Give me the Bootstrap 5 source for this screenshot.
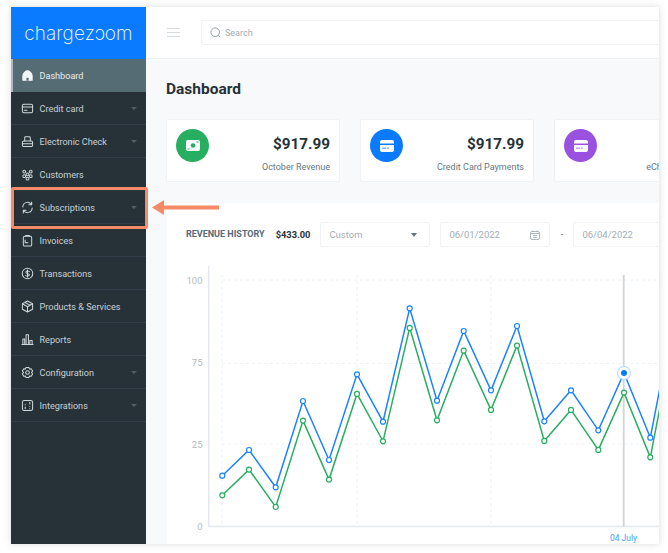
<!DOCTYPE html>
<html lang="en">
<head>
<meta charset="utf-8">
<title>Chargezoom Dashboard</title>
<link rel="stylesheet" href="https://cdn.jsdelivr.net/npm/bootstrap@5.3.0/dist/css/bootstrap.min.css">
<style>
html,body{height:553px;overflow:hidden;background:#fff;font-family:Roboto,"Liberation Sans",sans-serif}
.stage{width:668px;height:553px;padding:7px 9px 9px 11px;position:relative}
.appframe{height:537px;box-shadow:0 0 7px rgba(60,70,80,.2);overflow:hidden}
.sidebar{width:135px;background:#263138;flex:none}
.logobar{height:52px;background:#0a7bff;color:#fff;font-family:Inter,Roboto,sans-serif;font-size:19px;font-weight:200;letter-spacing:.1px;line-height:1}
.menuitem{height:33px;padding:0 9px 0 10px;color:#c9d1d6;font-size:9.1px;border-bottom:1px solid #2f3e48}
.menuitem span{padding-top:3px}
.menuitem.current{background:#566c75;color:#e8edef;border-left:2px solid #aeb9bd;padding-left:8px;border-bottom:0}
.menuitem svg.mi{width:13px;height:13px;margin-right:5.500px;flex:none;fill:none;stroke:#d0d7da;stroke-width:1.100;stroke-linecap:round;stroke-linejoin:round}
.caretmini{width:0;height:0;border-left:3px solid transparent;border-right:3px solid transparent;border-top:3px solid #4e606b}
.mainpane{min-width:0;background:#f8f9fb}
.topstrip{height:52px;background:#fff;border-bottom:1px solid #eef0f2;padding-left:21px;flex:none}
.burger{width:13px;height:9px;border-top:1px solid #d5dcdf;border-bottom:1px solid #d5dcdf;flex:none;margin-right:21px}
.burger::after{content:"";display:block;height:1px;background:#d5dcdf;margin-top:3px}
.searchfield{width:500px;height:25px;border:1px solid #f0f2f4;border-radius:2px;padding-left:8px;color:#a0acb3;font-size:9px;flex:none}
.searchfield svg{margin-right:4px}
.searchlabel{padding-top:3px}
.pagename{font-size:15.5px;font-weight:700;color:#263138;margin:21px 0 0 20px;line-height:18px}
.statrow{margin:21px 0 0 20px;gap:20px;flex-wrap:nowrap}
.statbox{width:174px;height:63px;background:#fff;border:1px solid #f0f2f4;border-radius:2px;flex:none;padding:9px 9px 0 9px}
.disc{width:33px;height:33px;border-radius:50%;flex:none}
.amount{font-size:15.3px;font-weight:700;color:#263138;line-height:19px;margin-top:6px}
.capt{font-size:9px;color:#68777f;line-height:12px;margin-top:7px}
.chartpanel{margin:21px 0 0 21px;background:#fff;flex:1;min-height:0;width:500px}
.filters{padding:19px 0 0 19px;height:62px;flex:none}
.rh{font-size:9px;font-weight:700;color:#56697a;margin-right:11px;white-space:nowrap;padding-top:1px}
.rv{font-size:9.300px;font-weight:700;color:#263138;margin-right:10px;padding-top:1px}
.filtertext{height:25px}
.fbox{height:25px;border:1px solid #f0f2f4;border-radius:2px;color:#a3adb4;font-size:9.500px;padding:0 9px 0 8px;flex:none}
.fbox span{padding-top:1px}
.fcustom{width:110px;margin-right:10px}
.fdate{width:110px}
.sep{font-size:9px;color:#55656e;margin:0 10px;width:3px;height:25px;flex:none}
.bcaret{width:0;height:0;border-left:3.500px solid transparent;border-right:3.500px solid transparent;border-top:4px solid #66757d;margin-right:3px}
.plotsvg{display:block;flex:none}
.plotsvg text{font-family:Roboto,"Liberation Sans",sans-serif;font-size:9.500px;fill:#b3bcc4}
.plotsvg text.xlab{fill:#4a9cff;font-size:8.500px}
.hilite{position:absolute;left:11px;top:187px;width:137px;height:42px;border:3.500px solid #f58a67;border-radius:2px;box-shadow:inset 0 0 2px rgba(0,0,0,.3);pointer-events:none}
.bigarrow{position:absolute;left:150px;top:198px}
</style>
</head>
<body>
<div class="stage">
<div class="appframe d-flex">
<aside class="sidebar d-flex flex-column">
<div class="logobar d-flex align-items-center justify-content-center">chargezɔom</div>
<div class="menuitem current d-flex align-items-center"><svg class="mi" viewBox="0 0 14 14"><path fill="#f2f5f6" stroke="#f2f5f6" d="M2 7.500C2 5 4.500 2 7 2s5 3 5 5.500V12H2z"/><path d="M5.800 12.500V9.500h2.400v3" fill="#566c75" stroke="none"/></svg><span>Dashboard</span></div>
<div class="menuitem d-flex align-items-center"><svg class="mi" viewBox="0 0 14 14"><rect x="1.500" y="2.500" width="11" height="9" rx="1.500"/><path d="M1.500 5.500h11M3.500 9h3"/></svg><span class="flex-grow-1">Credit card</span><i class="caretmini"></i></div>
<div class="menuitem d-flex align-items-center"><svg class="mi" viewBox="0 0 14 14"><rect x="1.500" y="6.500" width="11" height="6" rx="1.500"/><path d="M4 6.500V3a1 1 0 0 1 1-1h4a1 1 0 0 1 1 1v3.500M1.500 9.500h11"/></svg><span class="flex-grow-1">Electronic Check</span><i class="caretmini"></i></div>
<div class="menuitem d-flex align-items-center"><svg class="mi" viewBox="0 0 14 14"><circle cx="3.500" cy="3.800" r="1.500"/><circle cx="10.500" cy="3.800" r="1.500"/><circle cx="7" cy="6.800" r="1.500"/><circle cx="3.500" cy="8.800" r="1.500"/><circle cx="10.500" cy="8.800" r="1.500"/><circle cx="7" cy="11.500" r="1.500"/></svg><span>Customers</span></div>
<div class="menuitem d-flex align-items-center"><svg class="mi" viewBox="0 0 14 14"><path d="M2 6.500A5 5 0 0 1 11 3.500M12 7.500A5 5 0 0 1 3 10.500M11.500 1v3h-3M2.500 13v-3h3"/></svg><span class="flex-grow-1">Subscriptions</span><i class="caretmini"></i></div>
<div class="menuitem d-flex align-items-center"><svg class="mi" viewBox="0 0 14 14"><rect x="2.500" y="2.500" width="9" height="10.500" rx="1.500"/><path d="M5 2.500V1.500h4v1M4.500 6.500v3h3"/></svg><span>Invoices</span></div>
<div class="menuitem d-flex align-items-center"><svg class="mi" viewBox="0 0 14 14"><circle cx="7" cy="7" r="5.700"/><path d="M9 5c-.5-1-3.800-1.200-3.800.6C5.200 7.500 9 6.500 9 8.400 9 10 5.500 10 5 9M7 3.300v7.400"/></svg><span>Transactions</span></div>
<div class="menuitem d-flex align-items-center"><svg class="mi" viewBox="0 0 14 14"><path d="M7 1l5.500 3v6L7 13l-5.500-3V4zM1.500 4L7 7.200 12.500 4M7 7.200V13M4.200 2.500l5.500 3.100"/></svg><span>Products &amp; Services</span></div>
<div class="menuitem d-flex align-items-center"><svg class="mi" viewBox="0 0 14 14"><path d="M1 12.500h12M2 12.500V6.500h2v6M5.500 12.500V2h2.500v10.500M9.500 12.500V8h2.500v4.500"/></svg><span>Reports</span></div>
<div class="menuitem d-flex align-items-center"><svg class="mi" viewBox="0 0 14 14"><circle cx="7" cy="7" r="2"/><path d="M5.500 1.500h3l.7 1.700 1.800-.2 1.500 2.500L11.300 7l1.200 1.500-1.500 2.500-1.800-.2-.7 1.700h-3l-.7-1.700-1.800.2L1.500 8.500 2.700 7 1.500 5.500 3 3l1.800.2z"/></svg><span class="flex-grow-1">Configuration</span><i class="caretmini"></i></div>
<div class="menuitem d-flex align-items-center"><svg class="mi" viewBox="0 0 14 14"><rect x="1.500" y="1.500" width="11" height="11" rx="2"/><path d="M4.500 8.500v2M9.500 3.500v2M9.500 8v.1M9.500 10.500v.1M4.500 6v.1"/></svg><span class="flex-grow-1">Integrations</span><i class="caretmini"></i></div>
</aside>
<main class="mainpane flex-grow-1 d-flex flex-column">
<div class="topstrip d-flex align-items-center">
<div class="burger"></div>
<div class="searchfield d-flex align-items-center"><svg width="11" height="11" viewBox="0 0 11 11" fill="none" stroke="#93a1a9"><circle cx="5.200" cy="5.200" r="4.300"/><path d="M8.300 8.300l1.800 1.800"/></svg><span class="searchlabel">Search</span></div>
</div>
<h1 class="pagename">Dashboard</h1>
<div class="statrow d-flex">
<div class="statbox d-flex">
<div class="disc d-flex align-items-center justify-content-center" style="background:#27ae60"><svg width="14" height="13" viewBox="0 0 14 13"><rect x="0" y="1" width="14" height="11" rx="2" fill="#fff"/><circle cx="7" cy="6.500" r="2.300" fill="#27ae60"/><path d="M10.500 3h2M1.500 10h2" stroke="#27ae60"/></svg></div>
<div class="flex-grow-1 text-end"><div class="amount">$917.99</div><div class="capt">October Revenue</div></div>
</div>
<div class="statbox d-flex">
<div class="disc d-flex align-items-center justify-content-center" style="background:#0a7bff"><svg width="14" height="12" viewBox="0 0 14 12"><rect width="14" height="12" rx="2" fill="#fff"/><rect y="3.500" width="14" height="1.500" fill="#0a7bff"/><rect x="2" y="7.500" width="4" height="1.500" fill="#7cb6ff"/><rect x="7" y="7.500" width="2" height="1.500" fill="#7cb6ff"/></svg></div>
<div class="flex-grow-1 text-end"><div class="amount">$917.99</div><div class="capt">Credit Card Payments</div></div>
</div>
<div class="statbox d-flex">
<div class="disc d-flex align-items-center justify-content-center" style="background:#9b51e0"><svg width="14" height="12" viewBox="0 0 14 12"><rect width="14" height="12" rx="2" fill="#fff"/><rect y="3.500" width="14" height="1.500" fill="#9b51e0"/><rect x="2" y="7.500" width="4" height="1.500" fill="#c9a3ee"/><rect x="7" y="7.500" width="2" height="1.500" fill="#c9a3ee"/></svg></div>
<div class="flex-grow-1 text-end"><div class="amount">$917.99</div><div class="capt">eCheck Payments</div></div>
</div>
</div>
<section class="chartpanel d-flex flex-column">
<div class="filters d-flex align-items-start">
<div class="filtertext d-flex align-items-center"><span class="rh">REVENUE HISTORY</span><span class="rv">$433.00</span></div>
<div class="fbox fcustom d-flex align-items-center justify-content-between"><span>Custom</span><i class="bcaret"></i></div>
<div class="fbox fdate d-flex align-items-center justify-content-between"><span>06/01/2022</span><svg width="10" height="10" viewBox="0 0 10 10" fill="none" stroke="#9ba6ad" stroke-width=".8"><rect x=".5" y="1.500" width="9" height="8" rx="1.500"/><path d="M.5 3.500h9M3 .5v1.500M7 .5v1.500M3 5.500h4M3 7.500h4"/></svg></div>
<div class="sep d-flex align-items-center justify-content-center">-</div>
<div class="fbox fdate d-flex align-items-center justify-content-between"><span>06/04/2022</span></div>
</div>
<svg class="plotsvg" id="plot" width="492" height="279" viewBox="167 265 492 279"></svg>
</section>
</main>
</div>
<div class="hilite"></div>
<svg class="bigarrow" width="72" height="20" viewBox="0 0 72 20"><path d="M2 9.500L14 2V7.500H69v4H14V17z" fill="#f58a67"/></svg>
</div>
<script src="https://cdn.jsdelivr.net/npm/bootstrap@5.3.0/dist/js/bootstrap.bundle.min.js"></script>
<script>
var pts=[[222.3,475.7],[249,450],[275.7,487.3],[303,401],[329,460],[357,374.3],[383,421.7],[409.7,308.3],[437,400.7],[463.7,331],[491,390.3],[517,326],[544.3,421.3],[571,390.3],[598.3,430.3],[624,373],[650.3,437.7],[677,300]];
var s='';
s+='<path d="M208.700 266V526.500H659" fill="none" stroke="#e4e8ee" stroke-width="1.500"/>';
[280,363.5,444].forEach(function(y){s+='<path d="M222 '+y+'H659" stroke="#eef0f3" stroke-dasharray="3 3"/>'});
[222,357,491].forEach(function(x){s+='<path d="M'+x+' 275V526" stroke="#eef0f3" stroke-dasharray="3 3"/>'});
[['100',280],['75',362],['25',444],['0',526]].forEach(function(a){s+='<text x="202.500" y="'+(a[1]+3.5)+'" text-anchor="end">'+a[0]+'</text>'});
s+='<path d="M623.700 275V527" stroke="#cfd5da" stroke-width="1.800"/>';
function ln(dy,c){return '<polyline fill="none" stroke="'+c+'" stroke-width="1.500" points="'+pts.map(function(p){return p[0]+','+(p[1]+dy)}).join(' ')+'"/>'}
function dots(dy,c){return pts.map(function(p,i){return i==15&&dy==0?'':'<circle cx="'+p[0]+'" cy="'+(p[1]+dy)+'" r="2.500" fill="#fff" stroke="'+c+'" stroke-width="1.200"/>'}).join('')}
s+=ln(19.6,'#27ae60')+dots(19.6,'#27ae60')+ln(0,'#1a82ff')+dots(0,'#1a82ff');
s+='<circle cx="624" cy="373" r="6.500" fill="#fff" stroke="#bcd9ff" stroke-width="1.200"/><circle cx="624" cy="373" r="3" fill="#0a7bff"/>';
s+='<text class="xlab" x="623.500" y="541" text-anchor="middle">04 July</text>';
document.getElementById('plot').innerHTML=s;
</script>
</body>
</html>
